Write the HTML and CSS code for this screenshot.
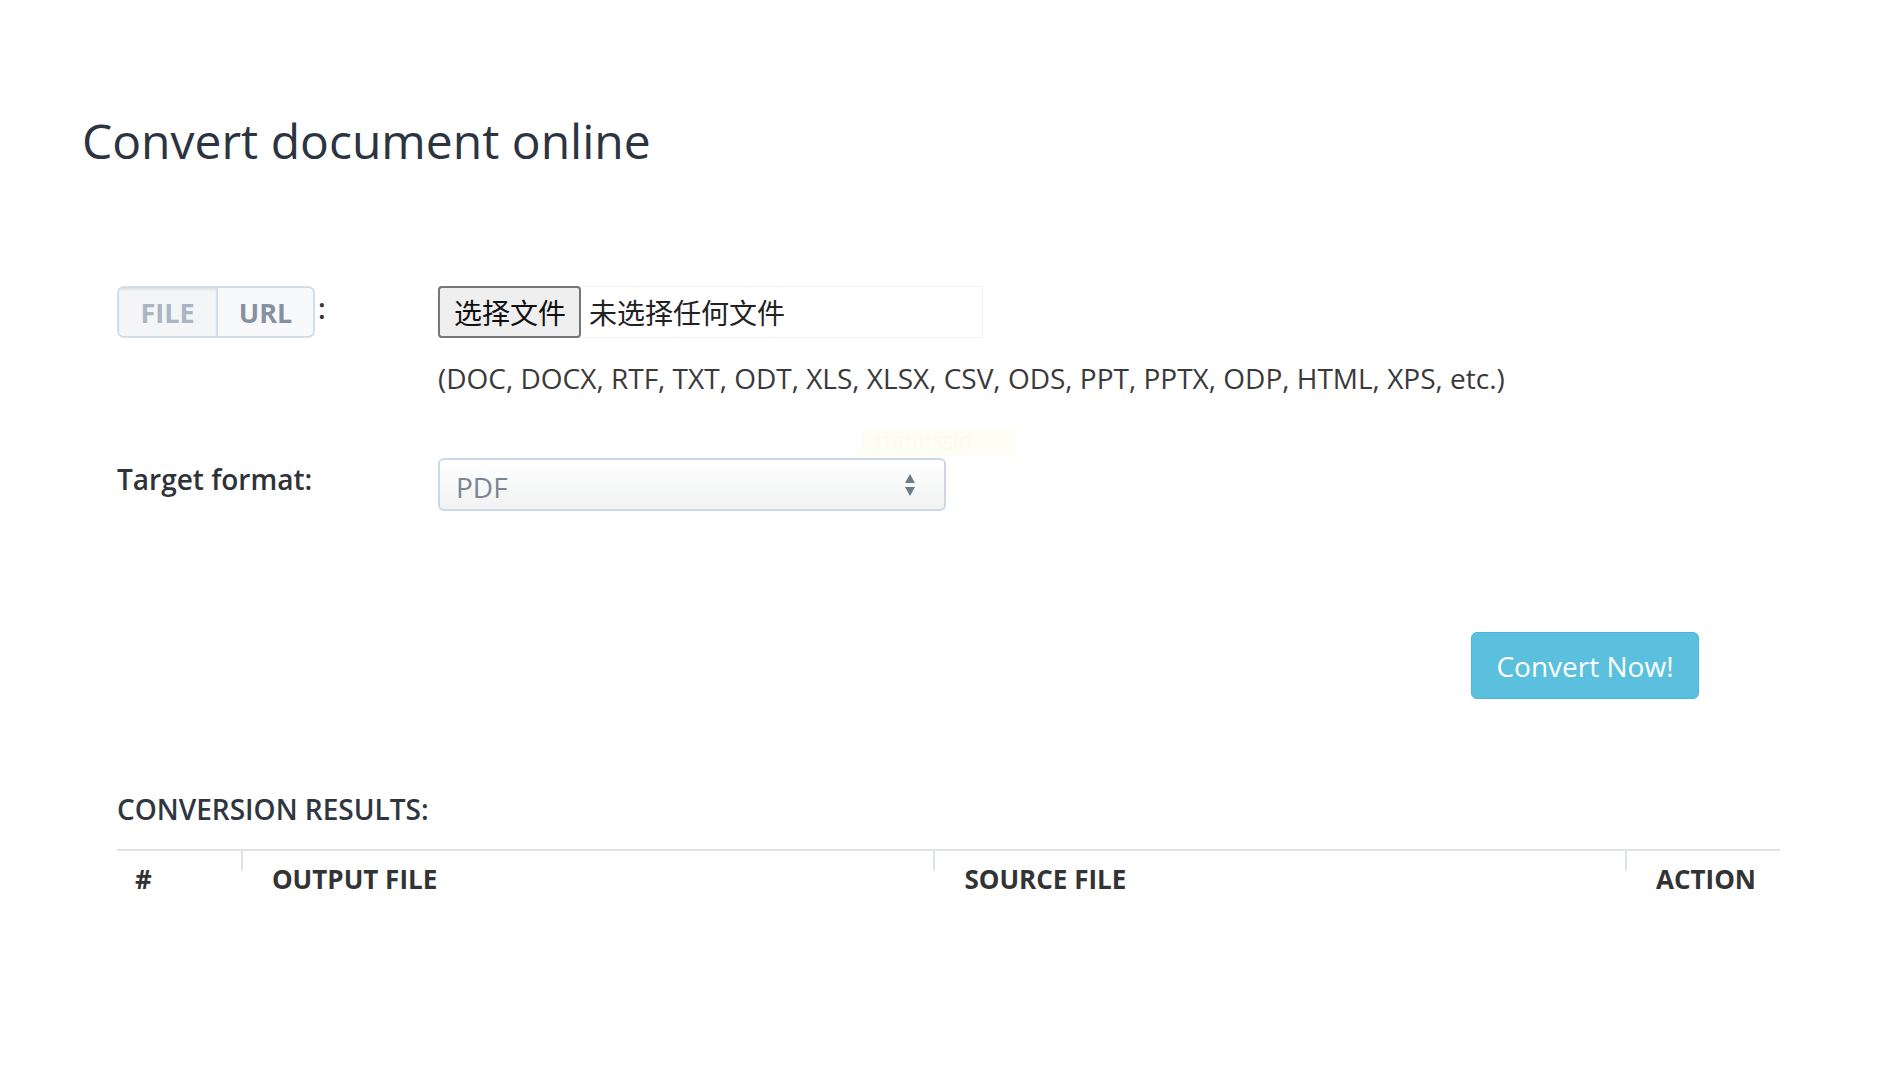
FILE: index.html
```html
<!DOCTYPE html>
<html lang="en">
<head>
<meta charset="utf-8">
<title>Convert document online</title>
<link rel="stylesheet" href="styles.css">
</head>
<body>
<main class="page">
  <h1 class="title">Convert document online</h1>
  <form class="form">
    <div class="stamp">1761015587</div>
    <div class="row row-file">
      <div class="label-col">
        <div class="toggle">
          <span class="seg seg-active">FILE</span>
          <span class="seg">URL</span>
        </div>
        <span class="colon">:</span>
      </div>
      <div class="field-col">
        <div class="file-input">
          <span class="file-btn">选择文件</span>
          <span class="file-status">未选择任何文件</span>
        </div>
        <p class="formats">(DOC, DOCX, RTF, TXT, ODT, XLS, XLSX, CSV, ODS, PPT, PPTX, ODP, HTML, XPS, etc.)</p>
      </div>
    </div>
    <div class="row row-target">
      <div class="label-col"><span class="label">Target format:</span></div>
      <div class="field-col">
        <div class="select">
          <span class="select-value">PDF</span>
          <svg class="select-arrows" width="12" height="24" viewBox="0 0 12 24">
            <path d="M6 1 L11 10 L1 10 Z" fill="#6f7b89"/>
            <path d="M1 14 L11 14 L6 23 Z" fill="#6f7b89"/>
          </svg>
        </div>
      </div>
    </div>
    <div class="actions">
      <button type="button" class="convert">Convert Now!</button>
    </div>
  </form>
  <section class="results">
    <h2 class="results-title">CONVERSION RESULTS:</h2>
    <table class="table">
      <thead>
        <tr>
          <th class="col-num">#</th>
          <th class="col-out">OUTPUT FILE</th>
          <th class="col-src">SOURCE FILE</th>
          <th class="col-act">ACTION</th>
        </tr>
      </thead>
      <tbody></tbody>
    </table>
  </section>
</main>
<aside class="edge"></aside>
</body>
</html>
```

FILE: styles.css
```css
html, body {
  margin: 0;
  padding: 0;
  background: #ffffff;
}
body {
  display: flex;
  min-height: 1088px;
  font-family: "Open Sans", "Noto Sans", sans-serif;
  color: #333333;
}
.page {
  flex: 1;
}
.edge {
  width: 3px;
  margin-top: 283px;
  background: #ececf1;
}
.title {
  margin: 112px 0 0 82px;
  font-size: 48px;
  line-height: 58px;
  font-weight: 400;
  color: #2b3440;
}
.form {
  position: relative;
  margin: 116px 100px 0 117px;
}
.stamp {
  position: absolute;
  left: 744px;
  top: 143px;
  width: 156px;
  height: 28px;
  background: #fefef5;
  color: #fbfbee;
  font-family: "Liberation Serif", serif;
  font-size: 20px;
  line-height: 28px;
  padding-left: 12px;
  box-sizing: border-box;
}
.row {
  display: flex;
  position: relative;
}
.label-col {
  width: 321px;
  flex: none;
  display: flex;
  align-items: flex-start;
}
.field-col {
  flex: 1;
}
.toggle {
  display: flex;
  height: 52px;
  box-sizing: border-box;
  border: 2px solid #d2dde8;
  border-radius: 7px;
  overflow: hidden;
  background: #f8f9fa;
}
.seg {
  display: flex;
  align-items: center;
  justify-content: center;
  font-size: 27px;
  font-weight: 700;
  color: #8591a3;
  height: 100%;
}
.seg:first-child {
  width: 97px;
  border-right: 2px solid #d6e0ea;
}
.seg:last-child {
  width: 95px;
}
.seg-active {
  color: #a9b5c5;
  background: #f3f5f7;
  box-shadow: inset 0 2px 2px rgba(0, 0, 0, 0.08);
}
.colon {
  margin-left: 3px;
  font-size: 28px;
  font-weight: 600;
  line-height: 44px;
  color: #333;
}
.file-input {
  display: flex;
  align-items: center;
  width: 545px;
  height: 52px;
  box-sizing: border-box;
  border: 1px solid #f3f3f3;
  border-left: none;
  font-family: "Noto Sans CJK SC", "Noto Sans", sans-serif;
  font-size: 28px;
}
.file-btn {
  display: flex;
  align-items: center;
  height: 52px;
  box-sizing: border-box;
  padding: 0 13px 0 14px;
  background: #efefef;
  border: 2px solid #767676;
  border-radius: 4px;
  color: #111;
}
.file-status {
  margin-left: 8px;
  color: #222;
}
.formats {
  margin: 21px 0 0 0;
  font-size: 28px;
  line-height: 38px;
  color: #3a3a3a;
}
.row-target {
  margin-top: 61px;
}
.label {
  font-size: 28px;
  font-weight: 600;
  color: #2f3237;
  line-height: 42px;
}
.select {
  position: relative;
  display: flex;
  align-items: center;
  justify-content: space-between;
  width: 508px;
  height: 53px;
  box-sizing: border-box;
  padding: 0 28px 0 16px;
  border: 2px solid #cbd8e5;
  border-radius: 6px;
  background: linear-gradient(#ffffff, #f1f2f3);
}
.select-value {
  font-size: 28px;
  color: #7b8593;
  padding-top: 4px;
}
.actions {
  display: flex;
  justify-content: flex-end;
  margin-top: 121px;
  padding-right: 81px;
}
.convert {
  width: 228px;
  height: 67px;
  border: 1px solid #46b8da;
  border-radius: 6px;
  background: #5bc0de;
  color: #ffffff;
  font-family: "Open Sans", "Noto Sans", sans-serif;
  font-size: 28px;
  font-weight: 400;
  padding: 0;
}
.results {
  margin: 88px 100px 0 117px;
}
.results-title {
  margin: 0;
  font-size: 28px;
  font-weight: 600;
  line-height: 44px;
  color: #2f3640;
}
.table {
  margin-top: 18px;
  width: 1663px;
  border-collapse: collapse;
  border-top: 2px solid #dfe2e6;
}
.table th {
  position: relative;
  text-align: left;
  font-size: 26px;
  font-weight: 700;
  color: #333;
  line-height: 36px;
  padding: 10px 0 0 31px;
}
.table th + th::before {
  content: "";
  position: absolute;
  left: 0;
  top: 0;
  width: 2px;
  height: 20px;
  background: #dde3ea;
}
.table .col-num {
  width: 106px;
  padding-left: 18px;
}
.table .col-out {
  width: 662px;
}
.table .col-src {
  width: 661px;
}
.table .col-act {
  padding-right: 24px;
}
```
